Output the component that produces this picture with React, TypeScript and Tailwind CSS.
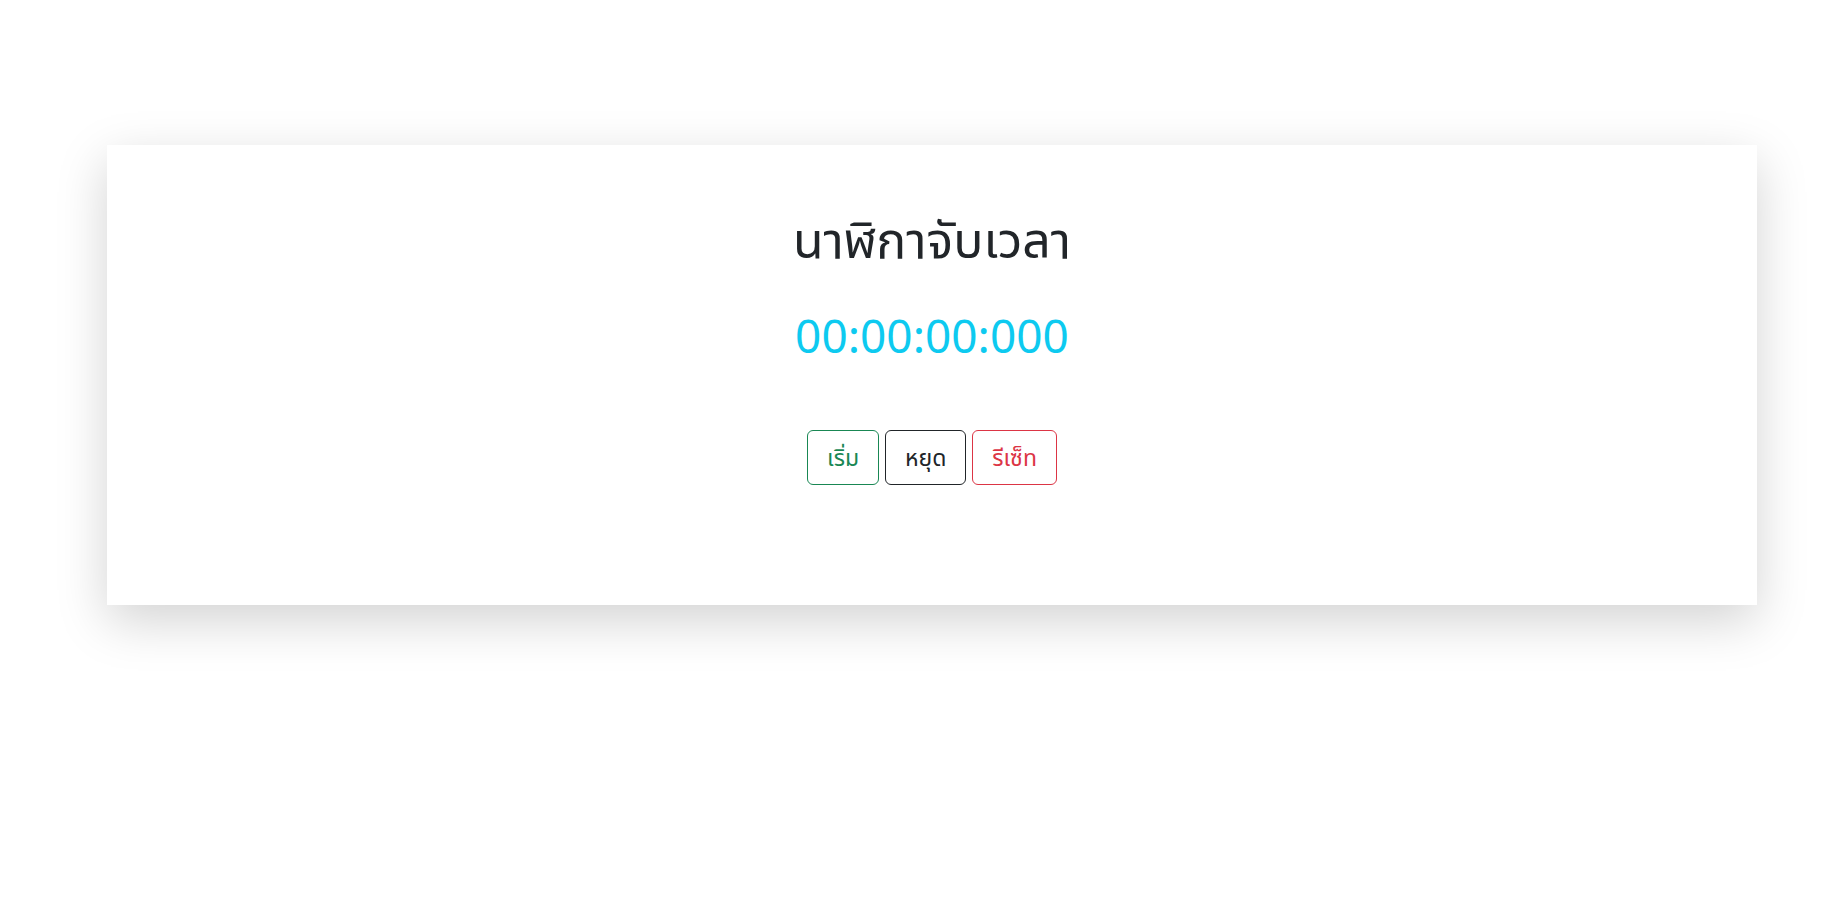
const App = () => {
  return (
    <div className="min-h-screen bg-white pt-[145px] font-['Noto_Sans','Noto_Sans_Thai',sans-serif]">
      <div className="ml-[107px] w-[1650px] h-[460px] bg-white shadow-[0_16px_48px_rgba(0,0,0,0.175)] flex flex-col items-center pt-[64px]">
        <h1 className="text-[50px] leading-[1.2] text-[#212529] font-normal">นาฬิกาจับเวลา</h1>
        <div className="mt-[39px] text-[46px] leading-[1.2] text-[#0dcaf0]">00:00:00:000</div>
        <div className="mt-[67px] flex gap-[6px]">
          <button className="h-[55px] px-[19px] rounded-[6px] border border-[#198754] text-[#198754] text-[23px]">เริ่ม</button>
          <button className="h-[55px] px-[19px] rounded-[6px] border border-[#212529] text-[#212529] text-[23px]">หยุด</button>
          <button className="h-[55px] px-[19px] rounded-[6px] border border-[#dc3545] text-[#dc3545] text-[23px]">รีเซ็ท</button>
        </div>
      </div>
    </div>
  );
};

export default App;
